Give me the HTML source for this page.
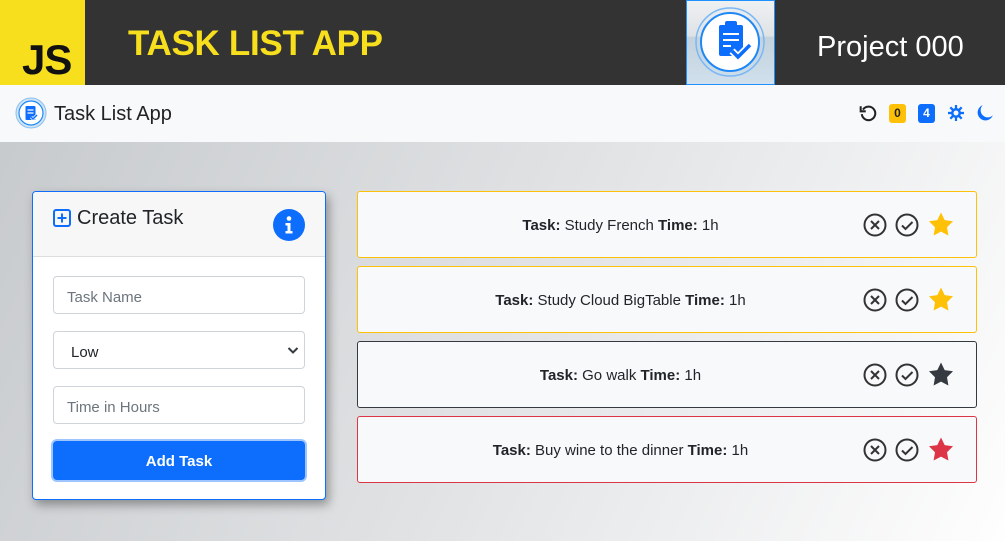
<!DOCTYPE html>
<html><head><meta charset="utf-8"><style>
*{box-sizing:border-box;margin:0;padding:0}
body{width:1005px;height:541px;overflow:hidden;font-family:"Liberation Sans",sans-serif;position:relative;background:linear-gradient(115deg,#c5c8cb 0%,#dfe1e3 50%,#fefefe 100%)}
.top{position:absolute;left:0;top:0;width:1005px;height:85px;background:#333}
.js{position:absolute;left:0;top:0;width:85px;height:85px;background:#f7df1e}
.js span{position:absolute;left:22px;top:36px;font-weight:bold;font-size:42px;color:#111;letter-spacing:-1px}
.title{position:absolute;left:128px;top:24px;color:#f7df1e;font-weight:bold;font-size:35px;letter-spacing:-0.3px}
.ibox{position:absolute;left:686px;top:0;width:89px;height:85px;border:1px solid #1e90ff;background:linear-gradient(#eef0f2 0%,#e0e3e6 42%,#c3d2dc 44%,#d0e0ec 100%)}
.proj{position:absolute;left:817px;top:31px;color:#fff;font-size:29px}
.nav{position:absolute;left:0;top:85px;width:1005px;height:57px;background:#f8f9fa}
.card{position:absolute;left:32px;top:191px;width:294px;height:309px;border:1px solid #0d6efd;border-radius:4px;background:#fff;box-shadow:3px 5px 10px rgba(0,0,0,.35);overflow:hidden}
.ch{height:65px;background:#f7f7f7;border-bottom:1px solid #ddd;position:relative}
.inp{position:absolute;left:20px;width:252px;height:38px;border:1px solid #ced4da;border-radius:4px;font-size:15px;color:#6c757d;padding:12px 13px;background:#fff}
.btn{position:absolute;left:20px;top:249px;width:252px;height:39px;background:#0d6efd;border-radius:4px;color:#fff;font-weight:bold;font-size:15px;text-align:center;line-height:41px;box-shadow:0 0 0 2px #9ec5fe}
.row{position:absolute;left:357px;width:620px;height:67px;border:1px solid;border-radius:3px;background:#f8f9fa}
.row .t{position:absolute;left:0;width:525px;top:25px;text-align:center;font-size:15px;color:#212529}
.row svg{position:absolute;top:20px}
</style></head><body>
<div class="top"></div>
<div class="js"><span>JS</span></div>
<div class="title">TASK LIST APP</div>
<div class="ibox"><svg width="87" height="83" viewBox="0 0 87 83"><circle cx="43" cy="41" r="34" fill="none" stroke="#7ab8f5" stroke-width="1.5"/><circle cx="43" cy="41" r="29" fill="#fff" stroke="#1e88f5" stroke-width="2"/><rect x="32" y="24" width="24" height="31" rx="2" fill="#0d6efd"/><rect x="38" y="20" width="12" height="6" rx="2" fill="#0d6efd"/><path d="M36 33h16M36 39h16M36 45h8" stroke="#fff" stroke-width="2"/><path d="M45 50l6 6 12-12" stroke="#fff" stroke-width="7" fill="none"/><path d="M45 50l6 6 12-12" stroke="#0d6efd" stroke-width="3.5" fill="none"/></svg></div>
<div class="proj">Project 000</div>
<div class="nav">
<svg style="position:absolute;left:15px;top:12px" width="32" height="32" viewBox="0 0 32 32"><circle cx="16" cy="16" r="15" fill="#cfe4f7" stroke="#8cc0ee"/><circle cx="16" cy="16" r="12" fill="#fff" stroke="#1e88f5" stroke-width="1.2"/><rect x="10.5" y="9" width="10" height="14" rx="1" fill="#0d6efd"/><path d="M12.5 13h6M12.5 16h6" stroke="#fff" stroke-width="1.2"/><path d="M16 20l2 2 4-4" stroke="#fff" stroke-width="3" fill="none"/><path d="M16 20l2 2 4-4" stroke="#0d6efd" stroke-width="1.5" fill="none"/></svg>
<div style="position:absolute;left:54px;top:18px;font-size:20px;color:#222">Task List App</div>
<svg style="position:absolute;left:859px;top:19px" width="18" height="18" viewBox="0 0 16 16"><path d="M3.5 5A6 6 0 1 1 2.5 9" fill="none" stroke="#222" stroke-width="1.8"/><path d="M1.5 2v4.5H6" fill="none" stroke="#222" stroke-width="1.8"/></svg>
<div style="position:absolute;left:889px;top:19px;width:17px;height:19px;background:#ffc107;border-radius:3px;font-size:12px;font-weight:bold;text-align:center;line-height:19px;color:#222">0</div>
<div style="position:absolute;left:918px;top:19px;width:17px;height:19px;background:#0d6efd;border-radius:3px;font-size:12px;font-weight:bold;text-align:center;line-height:19px;color:#fff">4</div>
<svg style="position:absolute;left:947px;top:19px" width="18" height="18" viewBox="0 0 18 18"><g stroke="#0d6efd" stroke-width="2.2"><path d="M9 1v16M1 9h16M3.3 3.3l11.4 11.4M14.7 3.3L3.3 14.7"/></g><circle cx="9" cy="9" r="5" fill="#0d6efd"/><circle cx="9" cy="9" r="2.5" fill="#f8f9fa"/></svg>
<svg style="position:absolute;left:976px;top:19px" width="18" height="18" viewBox="0 0 16 16"><path d="M6 1a7 7 0 1 0 9 9A6 6 0 0 1 6 1z" fill="#0d6efd"/></svg>
</div>
<div class="card">
<div class="ch">
<svg style="position:absolute;left:20px;top:17px" width="18" height="18" viewBox="0 0 18 18"><rect x="1" y="1" width="16" height="16" rx="2" fill="none" stroke="#0d6efd" stroke-width="2"/><path d="M9 4.5v9M4.5 9h9" stroke="#0d6efd" stroke-width="2"/></svg>
<div style="position:absolute;left:44px;top:15px;font-size:20px;color:#212529">Create Task</div>
<svg style="position:absolute;left:240px;top:17px" width="32" height="32" viewBox="0 0 32 32"><circle cx="16" cy="16" r="16" fill="#0d6efd"/><circle cx="16" cy="9.5" r="2.3" fill="#fff"/><path d="M12.5 14h5v8h2v2.5h-7V22h2v-5.5h-2z" fill="#fff"/></svg>
</div>
<div class="inp" style="top:84px">Task Name</div>
<div class="inp" style="top:139px;color:#212529;padding-left:17px">Low<svg style="position:absolute;right:5px;top:14px" width="12" height="9" viewBox="0 0 12 9"><path d="M1.5 2l4.5 4.5L10.5 2" stroke="#343a40" stroke-width="2" fill="none"/></svg></div>
<div class="inp" style="top:194px">Time in Hours</div>
<div class="btn">Add Task</div>
</div>

<div class="row" style="top:191px;border-color:#ffc107"><div class="t"><b>Task:</b> Study French <b>Time:</b> 1h</div>
<svg style="left:505px" width="100" height="26" viewBox="0 0 100 26"><circle cx="12" cy="13" r="10.5" fill="none" stroke="#333" stroke-width="2"/><path d="M8 9l8 8M16 9l-8 8" stroke="#333" stroke-width="2"/><circle cx="44" cy="13" r="10.5" fill="none" stroke="#333" stroke-width="2"/><path d="M39 13.5l3.5 3.5 7-7" stroke="#333" stroke-width="2" fill="none"/><path d="M78 0.5l3.7 7.6 8.3 1.2-6 5.9 1.4 8.3-7.4-3.9-7.4 3.9 1.4-8.3-6-5.9 8.3-1.2z" fill="#ffc107"/></svg></div>
<div class="row" style="top:266px;border-color:#ffc107"><div class="t"><b>Task:</b> Study Cloud BigTable <b>Time:</b> 1h</div>
<svg style="left:505px" width="100" height="26" viewBox="0 0 100 26"><circle cx="12" cy="13" r="10.5" fill="none" stroke="#333" stroke-width="2"/><path d="M8 9l8 8M16 9l-8 8" stroke="#333" stroke-width="2"/><circle cx="44" cy="13" r="10.5" fill="none" stroke="#333" stroke-width="2"/><path d="M39 13.5l3.5 3.5 7-7" stroke="#333" stroke-width="2" fill="none"/><path d="M78 0.5l3.7 7.6 8.3 1.2-6 5.9 1.4 8.3-7.4-3.9-7.4 3.9 1.4-8.3-6-5.9 8.3-1.2z" fill="#ffc107"/></svg></div>
<div class="row" style="top:341px;border-color:#343a40"><div class="t"><b>Task:</b> Go walk <b>Time:</b> 1h</div>
<svg style="left:505px" width="100" height="26" viewBox="0 0 100 26"><circle cx="12" cy="13" r="10.5" fill="none" stroke="#333" stroke-width="2"/><path d="M8 9l8 8M16 9l-8 8" stroke="#333" stroke-width="2"/><circle cx="44" cy="13" r="10.5" fill="none" stroke="#333" stroke-width="2"/><path d="M39 13.5l3.5 3.5 7-7" stroke="#333" stroke-width="2" fill="none"/><path d="M78 0.5l3.7 7.6 8.3 1.2-6 5.9 1.4 8.3-7.4-3.9-7.4 3.9 1.4-8.3-6-5.9 8.3-1.2z" fill="#343a40"/></svg></div>
<div class="row" style="top:416px;border-color:#dc3545"><div class="t"><b>Task:</b> Buy wine to the dinner <b>Time:</b> 1h</div>
<svg style="left:505px" width="100" height="26" viewBox="0 0 100 26"><circle cx="12" cy="13" r="10.5" fill="none" stroke="#333" stroke-width="2"/><path d="M8 9l8 8M16 9l-8 8" stroke="#333" stroke-width="2"/><circle cx="44" cy="13" r="10.5" fill="none" stroke="#333" stroke-width="2"/><path d="M39 13.5l3.5 3.5 7-7" stroke="#333" stroke-width="2" fill="none"/><path d="M78 0.5l3.7 7.6 8.3 1.2-6 5.9 1.4 8.3-7.4-3.9-7.4 3.9 1.4-8.3-6-5.9 8.3-1.2z" fill="#dc3545"/></svg></div>
</body></html>
